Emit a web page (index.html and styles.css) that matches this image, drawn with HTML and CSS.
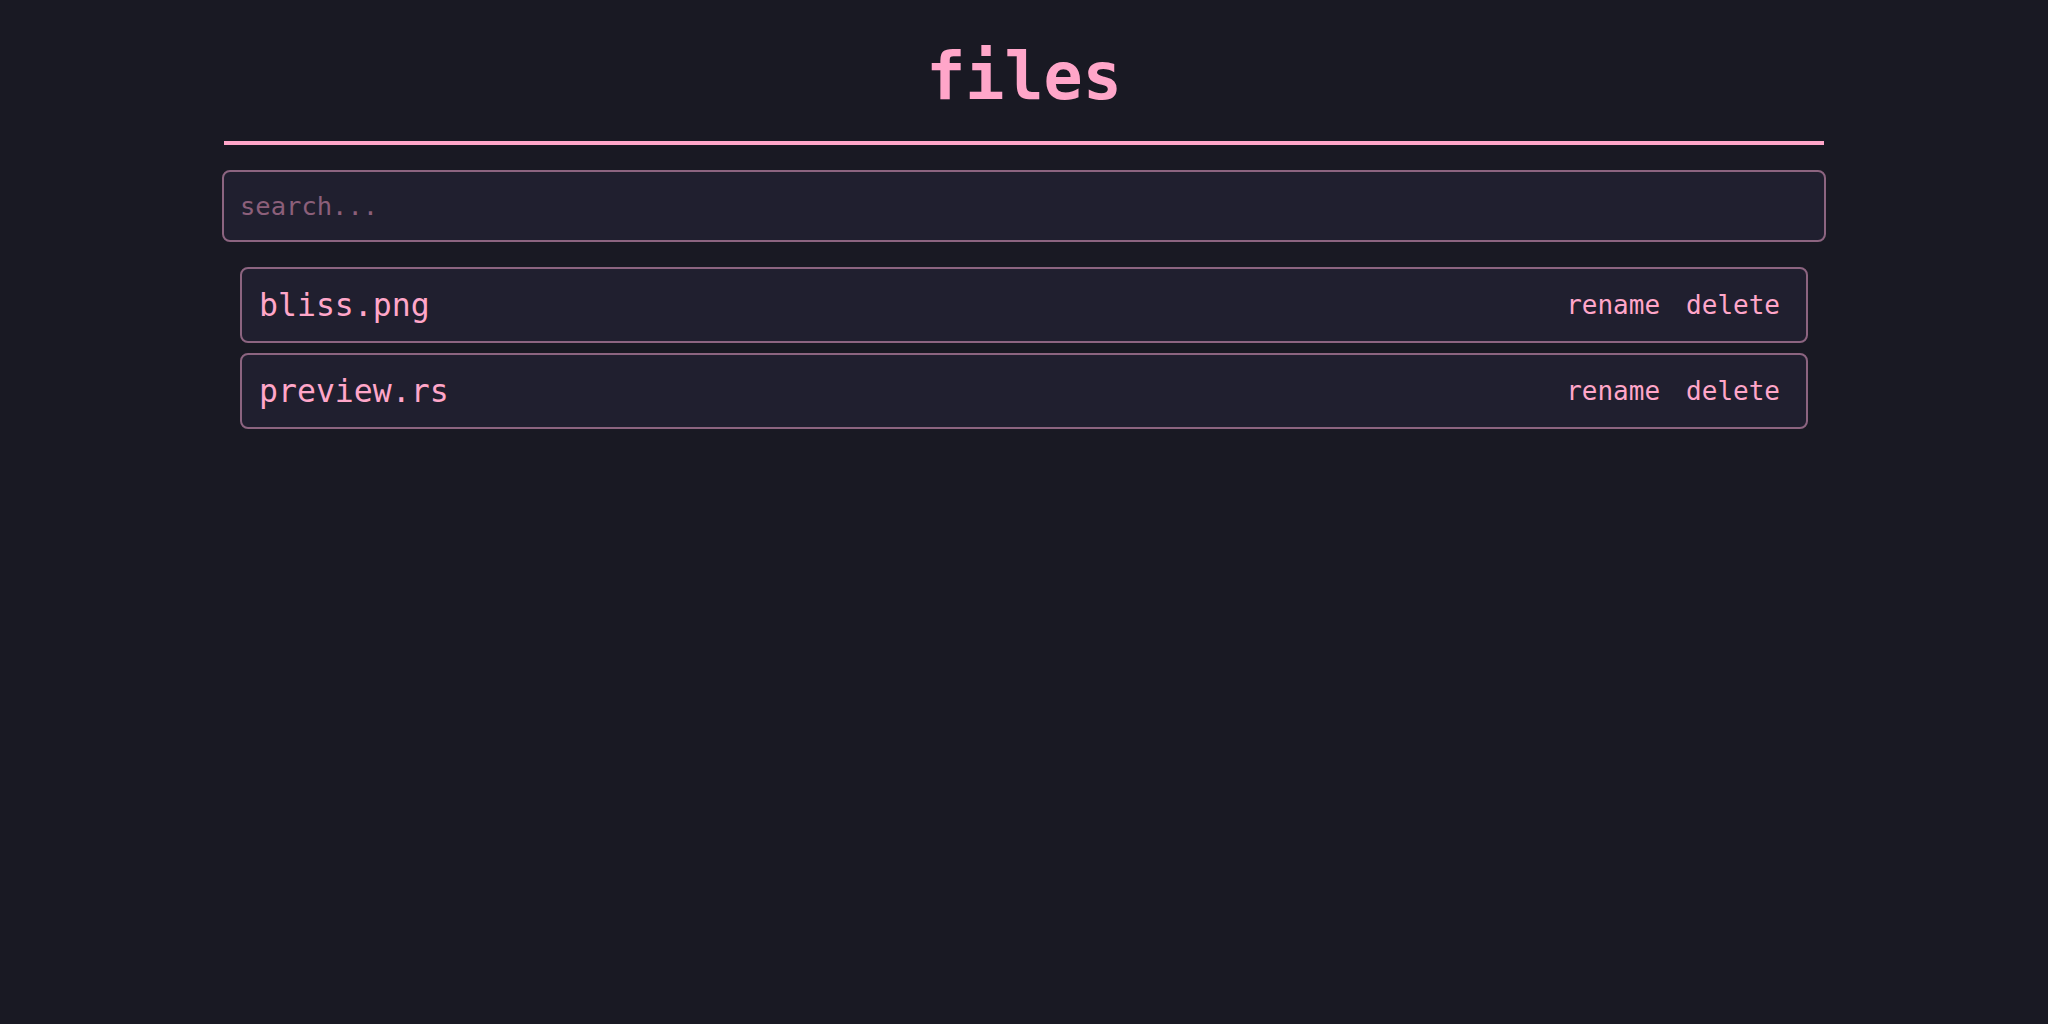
FILE: index.html
```html
<!DOCTYPE html>
<html lang="en">
<head>
<meta charset="utf-8">
<title>files</title>
<link rel="stylesheet" href="styles.css">
</head>
<body>
<main class="container">
  <h1 class="title">files</h1>
  <hr class="divider">
  <input class="search" type="text" placeholder="search...">
  <ul class="file-list">
    <li class="file-item">
      <span class="file-name">bliss.png</span>
      <span class="actions"><button class="action">rename</button><button class="action">delete</button></span>
    </li>
    <li class="file-item">
      <span class="file-name">preview.rs</span>
      <span class="actions"><button class="action">rename</button><button class="action">delete</button></span>
    </li>
  </ul>
</main>
</body>
</html>
```

FILE: styles.css
```css
html, body {
  margin: 0;
  padding: 0;
  background: #191923;
}
body {
  font-family: "DejaVu Sans Mono", "Liberation Mono", monospace;
  color: #ffa6c9;
}
.container {
  width: 1604px;
  margin: 0 auto;
  padding-top: 37px;
}
.title {
  margin: 0;
  text-align: center;
  font-size: 65px;
  line-height: 80px;
  font-weight: bold;
  color: #ffa6c9;
}
.divider {
  border: 0;
  height: 4px;
  background: #ffa6c9;
  margin: 24px 2px 25px;
}
.search {
  display: block;
  box-sizing: border-box;
  width: 100%;
  height: 72px;
  margin: 0;
  padding: 0 16px;
  background: #201f2f;
  border: 2px solid #8c6480;
  border-radius: 8px;
  font-family: inherit;
  font-size: 25.5px;
  color: #ffa6c9;
  outline: none;
}
.search::placeholder {
  color: #8c5f7a;
}
.file-list {
  list-style: none;
  margin: 25px 18px 0;
  padding: 0;
  display: flex;
  flex-direction: column;
  gap: 10px;
}
.file-item {
  box-sizing: border-box;
  height: 76px;
  display: flex;
  align-items: center;
  justify-content: space-between;
  padding: 0 26px 0 17px;
  background: #201f2f;
  border: 2px solid #8c6480;
  border-radius: 8px;
}
.file-name {
  font-size: 31.5px;
}
.actions {
  display: flex;
  gap: 26px;
}
.action {
  background: none;
  border: 0;
  padding: 0;
  font-family: inherit;
  font-size: 26px;
  color: #ffa6c9;
  cursor: pointer;
}
```
